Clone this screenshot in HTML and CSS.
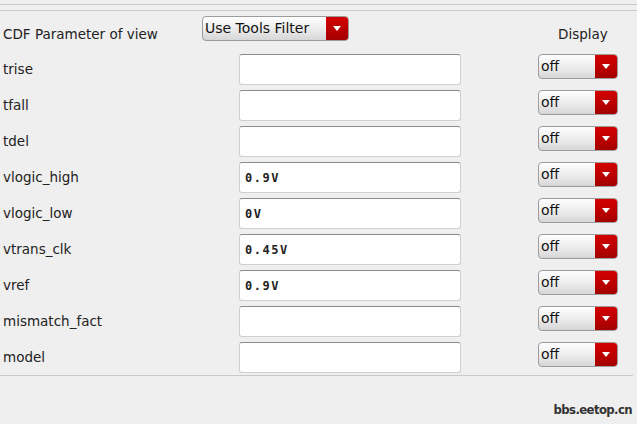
FILE: index.html
```html
<!DOCTYPE html>
<html lang="en">
<head>
  <meta charset="UTF-8" />
  <title>CDF Parameters</title>
  <link rel="stylesheet" href="styles.css">
</head>
<body>

  <div class="top-rule"></div>

  <div class="panel">
    <div class="header">
      <span class="header-label">CDF Parameter of view</span>
      <div class="combo combo-wide">
        <span class="combo-text">Use Tools Filter</span>
        <span class="combo-btn"><span class="arrow"></span></span>
      </div>
      <span class="display-label">Display</span>
    </div>

    <div class="rows">
      <div class="row">
        <span class="label">trise</span>
        <input class="field" type="text" value="">
        <div class="combo"><span class="combo-text">off</span><span class="combo-btn"><span class="arrow"></span></span></div>
      </div>
      <div class="row">
        <span class="label">tfall</span>
        <input class="field" type="text" value="">
        <div class="combo"><span class="combo-text">off</span><span class="combo-btn"><span class="arrow"></span></span></div>
      </div>
      <div class="row">
        <span class="label">tdel</span>
        <input class="field" type="text" value="">
        <div class="combo"><span class="combo-text">off</span><span class="combo-btn"><span class="arrow"></span></span></div>
      </div>
      <div class="row">
        <span class="label">vlogic_high</span>
        <input class="field" type="text" value="0.9V">
        <div class="combo"><span class="combo-text">off</span><span class="combo-btn"><span class="arrow"></span></span></div>
      </div>
      <div class="row">
        <span class="label">vlogic_low</span>
        <input class="field" type="text" value="0V">
        <div class="combo"><span class="combo-text">off</span><span class="combo-btn"><span class="arrow"></span></span></div>
      </div>
      <div class="row">
        <span class="label">vtrans_clk</span>
        <input class="field" type="text" value="0.45V">
        <div class="combo"><span class="combo-text">off</span><span class="combo-btn"><span class="arrow"></span></span></div>
      </div>
      <div class="row">
        <span class="label">vref</span>
        <input class="field" type="text" value="0.9V">
        <div class="combo"><span class="combo-text">off</span><span class="combo-btn"><span class="arrow"></span></span></div>
      </div>
      <div class="row">
        <span class="label">mismatch_fact</span>
        <input class="field" type="text" value="">
        <div class="combo"><span class="combo-text">off</span><span class="combo-btn"><span class="arrow"></span></span></div>
      </div>
      <div class="row">
        <span class="label">model</span>
        <input class="field" type="text" value="">
        <div class="combo"><span class="combo-text">off</span><span class="combo-btn"><span class="arrow"></span></span></div>
      </div>
    </div>
  </div>

  <div class="footer">
    <span class="watermark">bbs.eetop.cn</span>
  </div>

</body>
</html>
```

FILE: styles.css
```css
body {
  margin: 0;
  background: #efefef;
  font-family: 'DejaVu Sans', sans-serif;
  font-size: 13.5px;
  color: #222;
  width: 637px;
  height: 424px;
  overflow: hidden;
}

.top-rule {
  margin-top: 4px;
  height: 5px;
  border-top: 1px solid #c9c9c9;
  border-bottom: 1px solid #c9c9c9;
}

.panel {
  margin-right: 3px;
  padding-bottom: 2px;
  border-bottom: 1px solid #c9c9c9;
  border-bottom-right-radius: 3px;
}

.header {
  display: flex;
  align-items: flex-start;
  height: 43px;
}

.header-label {
  margin-left: 3px;
  margin-top: 15px;
  line-height: 16px;
  width: 199px;
}

.display-label {
  margin-left: 209px;
  margin-top: 15px;
  line-height: 16px;
}

.rows {
  display: flex;
  flex-direction: column;
  gap: 5px;
}

.row {
  display: flex;
  align-items: flex-start;
  height: 31px;
}

.label {
  width: 236px;
  margin-left: 3px;
  line-height: 31px;
}

.field {
  width: 222px;
  height: 31px;
  box-sizing: border-box;
  margin: 0;
  padding: 0 5px;
  background: #fff;
  border: 1px solid #cfcfcf;
  border-top-color: #8c8c8c;
  border-radius: 3px;
  font-family: 'DejaVu Sans Mono', monospace;
  font-weight: bold;
  font-size: 12px;
  letter-spacing: 1.5px;
  color: #222;
  outline: none;
}

.combo {
  display: flex;
  width: 80px;
  height: 25px;
  box-sizing: border-box;
  margin-left: 77px;
  border: 1px solid #9c9c9c;
  border-radius: 4px;
  overflow: hidden;
  background: linear-gradient(#ffffff, #e9e9e9 60%, #d6d6d6);
}

.combo-wide {
  width: 147px;
  margin: 5px 0 0 0;
}

.combo-text {
  flex: 1;
  padding-left: 2px;
  font-size: 14px;
  line-height: 22px;
  color: #111;
}

.combo-btn {
  width: 22px;
  display: flex;
  align-items: center;
  justify-content: center;
  background: linear-gradient(#d40000, #b80000 60%, #a30000);
}

.arrow {
  width: 0;
  height: 0;
  border-left: 4px solid transparent;
  border-right: 4px solid transparent;
  border-top: 5px solid #fff;
}

.footer {
  display: flex;
  justify-content: flex-end;
  padding: 26px 5px 0 0;
}

.watermark {
  font-family: 'DejaVu Sans Condensed', 'DejaVu Sans', sans-serif;
  font-weight: bold;
  font-size: 13px;
  color: #333;
  letter-spacing: -0.6px;
}
```
